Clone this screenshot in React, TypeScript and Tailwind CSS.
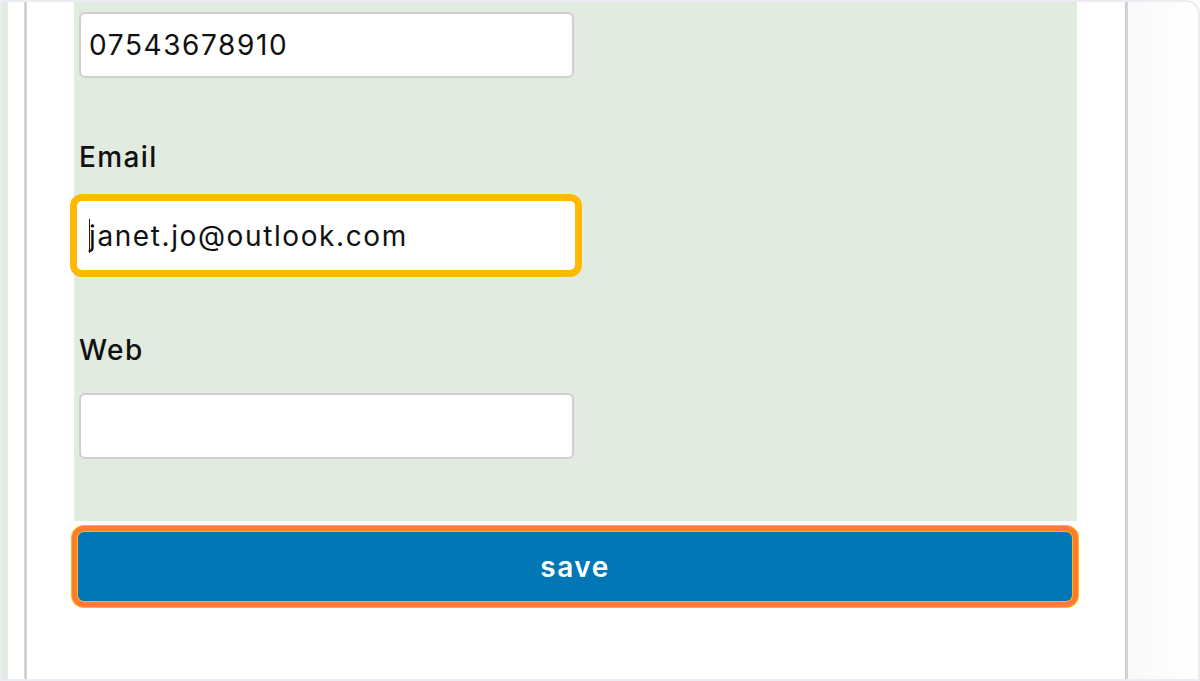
import React from 'react';

const font = { fontFamily: 'Inter, "Noto Sans", sans-serif' };

interface FieldProps {
  value?: string;
}

const TextBox = ({ value }: FieldProps) => (
  <div className="w-[495px] h-[66px] bg-white border-2 border-[#cfcfcf] rounded-[6px] pl-[8px] flex items-center text-[28px] tracking-[1.6px] text-[#111]">
    {value}
  </div>
);

const Label = ({ children }: { children: React.ReactNode }) => (
  <div className="h-[36px] leading-[36px] text-[28px] tracking-[1.4px] font-medium text-[#111]">{children}</div>
);

const App = () => {
  return (
    <div
      className="w-[1200px] h-[681px] border-2 border-[#ececf2] rounded-tr-[14px] overflow-hidden flex bg-white"
      style={font}
    >
      <div className="w-[6px] bg-[#e2ece1]" />
      <div className="w-[16px] bg-white" />
      <div className="w-[3px] bg-gradient-to-r from-[#e0e0e0] via-[#c9c9c9] to-[#dcdcdc]" />

      <div className="w-[1098px] bg-white pl-[47px] flex flex-col">
        <div className="w-[1003px] h-[519px] bg-[#e1ebe0] pt-[10px] pl-[5px] flex flex-col">
          <TextBox value="07543678910" />

          <div className="mt-[61px]">
            <Label>Email</Label>
          </div>
          <div className="mt-[19px] -ml-[9px] w-[512px] h-[83px] border-[7px] border-[#ffb900] rounded-[12px] bg-white pl-[12px] flex items-center text-[28px] tracking-[1.6px] text-[#111]">
            <span className="inline-block w-px h-[34px] bg-[#222] -mr-[1px]" />
            <span>janet.jo@outlook.com</span>
          </div>

          <div className="mt-[55px]">
            <Label>Web</Label>
          </div>
          <div className="mt-[25px]">
            <TextBox />
          </div>
        </div>

        <button className="mt-[11px] ml-[4px] w-[994px] h-[69px] bg-[#0277b6] rounded-[6px] text-white text-[28px] tracking-[1.5px] font-semibold shadow-[0_0_0_1px_#ffb900,0_0_0_6px_#ff7a33,0_0_0_7px_#ffb900]">
          save
        </button>
      </div>

      <div className="w-[3px] bg-gradient-to-r from-[#c9c9c9] to-[#d9d9d9]" />
      <div className="flex-1 bg-gradient-to-r from-[#f9f9fb] to-white" />
    </div>
  );
};

export default App;
